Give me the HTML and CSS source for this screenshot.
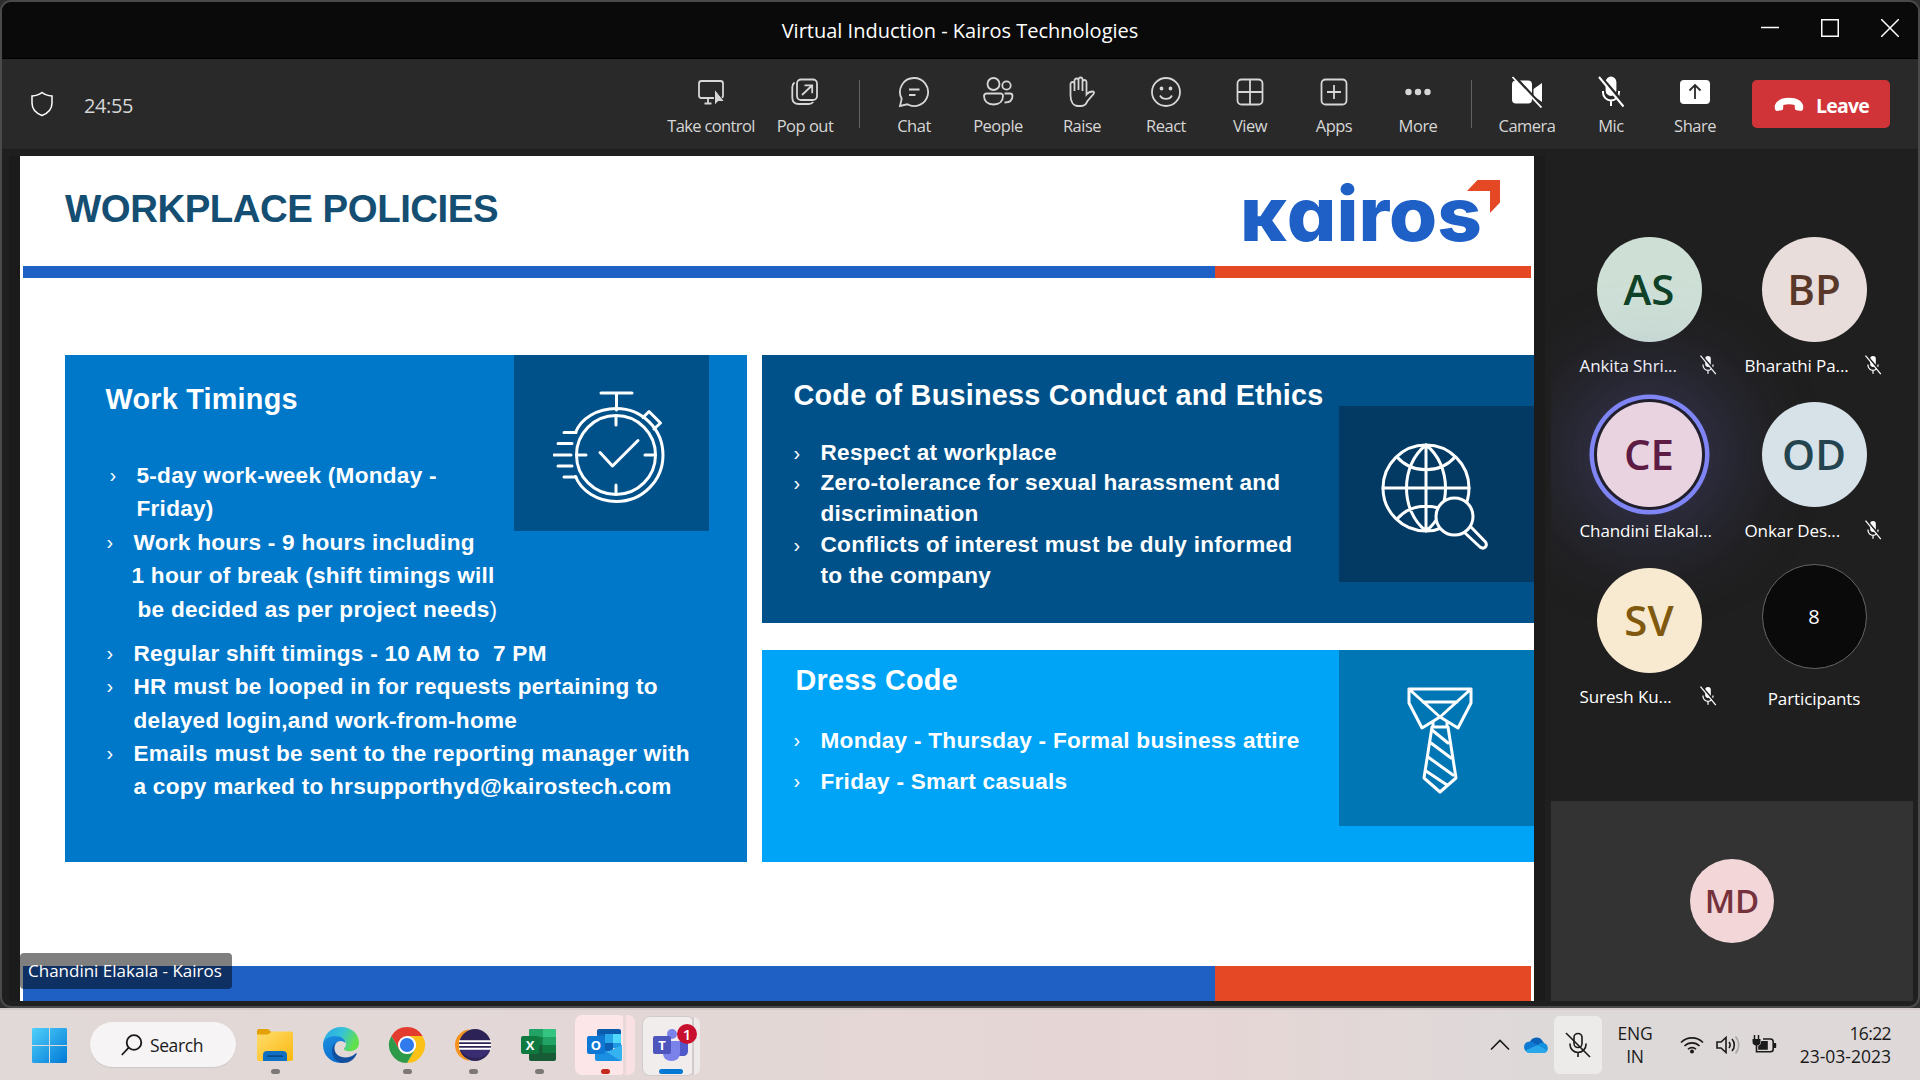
FILE: index.html
```html
<!DOCTYPE html>
<html lang="en">
<head>
<meta charset="utf-8">
<title>Virtual Induction - Kairos Technologies</title>
<link rel="stylesheet" href="styles.css">
</head>
<body>
<svg width="0" height="0" class="defs">
  <defs>
    <symbol id="mic-off" viewBox="0 0 32 32">
      <rect x="11.500" y="1.500" width="9" height="17.500" rx="4.500" fill="currentColor"/>
      <path d="M8 15v1.500a8 8 0 0 0 16 0V15M16 24.500V30" fill="none" stroke="currentColor" stroke-width="2"/>
      <path d="M5.500.500 31 30" stroke="var(--cut)" stroke-width="3"/>
      <path d="M4 1 28.500 30.500" stroke="currentColor" stroke-width="2"/>
    </symbol>
  </defs>
</svg>
<div class="window">
  <header class="titlebar">
    <span class="title">Virtual Induction - Kairos Technologies</span>
    <div class="winbtns">
      <svg width="18" height="18" viewBox="0 0 18 18"><path d="M0 8.500h18"/></svg>
      <svg width="18" height="18" viewBox="0 0 18 18"><path d="M.75.750h16.500v16.500H.75z"/></svg>
      <svg width="18" height="18" viewBox="0 0 18 18"><path d="M0 0l18 18M18 0 0 18"/></svg>
    </div>
  </header>
  <div class="toolbar">
    <svg class="shield" width="24" height="26" viewBox="0 0 24 26"><path d="M12 1.500c3 2.500 6 3.300 10 3.500v7c0 6-3.500 10-10 12.500C5.500 22 2 18 2 12V5c4-.2 7-1 10-3.500z"/></svg>
    <span class="timer">24:55</span>
    <div class="tool take">
      <svg viewBox="0 0 32 32"><rect x="4" y="5" width="24" height="17" rx="2.500"/><path d="M13 22v5M9.500 27.500h7"/><path d="M19.500 13v16.500l3.500-4h6.500z" fill="#d6d6d6" stroke="#292929" stroke-width="1"/></svg>
      <span>Take control</span>
    </div>
    <div class="tool pop">
      <svg viewBox="0 0 32 32"><rect x="8" y="3.500" width="20" height="20.500" rx="4"/><path d="M5.500 6.500C3.800 8 3.300 9 3.300 11v10.500c0 4 2.500 6.500 6.500 6.500h10c2 0 3.200-.6 4.500-2"/><path d="M13 19 23 9.500M15.500 9.300h7.700v8"/></svg>
      <span>Pop out</span>
    </div>
    <i class="sep s1"></i>
    <div class="tool">
      <svg viewBox="0 0 32 32"><path d="M16 2a14 14 0 1 1-6.600 26.300L2 30l1.700-7.300A14 14 0 0 1 16 2z"/><path d="M11 13.500h10.500M11 19h6.500"/></svg>
      <span>Chat</span>
    </div>
    <div class="tool">
      <svg viewBox="0 0 32 32"><circle cx="11.500" cy="8" r="6"/><circle cx="24.500" cy="9.500" r="4.200"/><path d="M4.500 17.500h14a2.500 2.500 0 0 1 2.500 2.500c0 5-3.500 8.500-9.500 8.500S2 25 2 20a2.500 2.500 0 0 1 2.500-2.500zM22.500 17.500H28a2.500 2.500 0 0 1 2.500 2.500c0 4-2.500 6.500-8 6.500"/></svg>
      <span>People</span>
    </div>
    <div class="tool">
      <svg viewBox="0 0 32 32"><path d="M8.500 15V8a2 2 0 0 0-4 0v11c0 6 2.500 11 7.500 11h3c4 0 5-2 6.500-5l6-7c1-1.500.5-2.500-1-2.500-2.500 0-4 .5-6 3V6a2 2 0 0 0-4 0v9M8.500 15V4.500a2 2 0 0 1 4 0V14M12.500 14V3.500a2 2 0 0 1 4 0V14"/></svg>
      <span>Raise</span>
    </div>
    <div class="tool">
      <svg viewBox="0 0 32 32"><circle cx="16" cy="16" r="14"/><circle cx="11.500" cy="12.500" r="1" fill="#d6d6d6"/><circle cx="20.500" cy="12.500" r="1" fill="#d6d6d6"/><path d="M10 19.500c2.500 4.500 9.500 4.500 12 0"/></svg>
      <span>React</span>
    </div>
    <div class="tool">
      <svg viewBox="0 0 32 32"><rect x="3.500" y="3.500" width="25" height="25" rx="4"/><path d="M16 3.500v25M3.500 16h25"/></svg>
      <span>View</span>
    </div>
    <div class="tool">
      <svg viewBox="0 0 32 32"><rect x="3.500" y="3.500" width="25" height="25" rx="4"/><path d="M16 9v14M9 16h14"/></svg>
      <span>Apps</span>
    </div>
    <div class="tool">
      <svg viewBox="0 0 32 32"><g fill="#d6d6d6" stroke="none"><circle cx="6.500" cy="16" r="3.200"/><circle cx="16" cy="16" r="3.200"/><circle cx="25.500" cy="16" r="3.200"/></g></svg>
      <span>More</span>
    </div>
    <i class="sep s2"></i>
    <div class="tool on">
      <svg viewBox="0 0 32 32"><rect x="1" y="4.500" width="20" height="23" rx="4" fill="#fff" stroke="none"/><path d="M22.500 13 31 7v19l-8.500-6z" fill="#fff" stroke="none"/><path d="M4 1 32 31.500" stroke="#292929" stroke-width="3"/><path d="M1.500 1 30.500 31.500"/></svg>
      <span>Camera</span>
    </div>
    <div class="tool on">
      <svg viewBox="0 0 32 32" class="micbig"><use href="#mic-off"/></svg>
      <span>Mic</span>
    </div>
    <div class="tool on">
      <svg viewBox="0 0 32 32"><rect x="1" y="4" width="30" height="24" rx="4" fill="#fff" stroke="none"/><path d="M16 23V9.500M10.500 14.500 16 9l5.500 5.500" stroke="#292929"/></svg>
      <span>Share</span>
    </div>
    <div class="leave">
      <svg width="30" height="16" viewBox="0 0 30 16"><path d="M15 .8C7 .8 1.500 4.200.8 9c-.3 2.300.2 4.800 2 5l4.700-.8c1.300-.3 1.600-1 1.700-2.500l.1-2.800c3.500-1 7.900-1 11.400 0l.1 2.800c.1 1.500.4 2.200 1.700 2.500l4.700.8c1.800-.2 2.300-2.700 2-5C28.500 4.200 23 .8 15 .8z" fill="#fff"/></svg>
      <span>Leave</span>
    </div>
  </div>
  <main class="stage">
    <section class="slide">
      <div class="slide-head">
        <h1>WORKPLACE POLICIES</h1>
        <svg class="logo" width="262" height="72" viewBox="0 0 262 72">
          <text x="-3" y="65" textLength="242" lengthAdjust="spacingAndGlyphs">кairos</text>
          <path d="M234.500 4H257v22.500L247 37V15h-23z" fill="#e54824"/>
        </svg>
      </div>
      <div class="stripe"><i></i><i></i></div>
      <div class="cards">
        <article class="card timings">
          <div class="copy">
            <h2>Work Timings</h2>
            <p class="li in">5-day work-week (Monday -</p>
            <p class="in">Friday)</p>
            <p class="li second">Work hours - 9 hours including</p>
            <p class="out">1 hour of break (shift timings will</p>
            <p class="in2">be decided as per project needs<b>)</b></p>
            <p class="li gap">Regular shift timings - 10 AM to&nbsp; 7 PM</p>
            <p class="li">HR must be looped in for requests pertaining to</p>
            <p>delayed login,and work-from-home</p>
            <p class="li">Emails must be sent to the reporting manager with</p>
            <p>a copy marked to hrsupporthyd@kairostech.com</p>
          </div>
          <div class="pic">
            <svg width="112" height="112" viewBox="0 0 112 112">
              <path d="M48 2h31M63.500 2v17"/>
              <path d="M22.500 41.500C28 27.500 44 17.500 63.500 17.500a46.500 46.500 0 0 1 0 93C44 110.500 28 99.500 22.500 85.500"/>
              <circle cx="63" cy="64" r="39.500"/>
              <path d="M63 26v8M63 94v8M25 64h8M92 64h9M11 41.500h12M5 52.500h14M1 64h17M5 75h14M11 86h12"/>
              <path d="M47 61.500 59.500 75 85 49.500"/>
              <path d="M90 26.500 96 20.500 107.500 32 101 38"/>
            </svg>
          </div>
        </article>
        <div class="col">
          <article class="card ethics">
            <div class="copy">
              <h2>Code of Business Conduct and Ethics</h2>
              <p class="li">Respect at workplace</p>
              <p class="li">Zero-tolerance for sexual harassment and</p>
              <p>discrimination</p>
              <p class="li">Conflicts of interest must be duly informed</p>
              <p>to the company</p>
            </div>
            <div class="pic">
              <svg width="108" height="108" viewBox="0 0 108 108">
                <circle cx="45" cy="45" r="43"/>
                <path d="M45 2v86M2 45h86M45 2C19 22 19 68 45 88M45 2c26 20 26 66 0 86M16 14c15 17 43 17 58 0M16 76c15-17 43-17 58 0"/>
                <circle cx="73.500" cy="73.500" r="18.500" class="lens"/>
                <path d="M84 90l15 14c4 3 8-1 5.500-5L90 84"/>
              </svg>
            </div>
          </article>
          <article class="card dress">
            <div class="copy">
              <h2>Dress Code</h2>
              <p class="li">Monday - Thursday - Formal business attire</p>
              <p class="li">Friday - Smart casuals</p>
            </div>
            <div class="pic">
              <svg width="66" height="108" viewBox="0 0 66 108">
                <path d="M2 2h62v14L51 41 33 30 15 41 2 16zM2 2l31 28L64 2M16 15h34M26 35v5h14v-5M25 40 17 91l16 14 16-14-8-51"/>
                <path d="M25 43l16 13M24 56l20 15M21 70l25 18M19 84l21 14"/>
              </svg>
            </div>
          </article>
        </div>
      </div>
      <div class="footer"><i></i><i></i></div>
      <span class="presenter">Chandini Elakala - Kairos</span>
    </section>
    <aside class="side">
      <div class="people">
        <div class="person"><span class="av as">AS</span><div class="nm"><span>Ankita Shri...</span><svg viewBox="0 0 32 32"><use href="#mic-off"/></svg></div></div>
        <div class="person"><span class="av bp">BP</span><div class="nm"><span>Bharathi Pa...</span><svg viewBox="0 0 32 32"><use href="#mic-off"/></svg></div></div>
        <div class="person"><span class="av ce">CE</span><div class="nm"><span>Chandini Elakal...</span></div></div>
        <div class="person"><span class="av od">OD</span><div class="nm"><span>Onkar Des...</span><svg viewBox="0 0 32 32"><use href="#mic-off"/></svg></div></div>
        <div class="person"><span class="av sv">SV</span><div class="nm"><span>Suresh Ku...</span><svg viewBox="0 0 32 32"><use href="#mic-off"/></svg></div></div>
        <div class="person more"><span class="av count">8</span><div class="nm"><span>Participants</span></div></div>
      </div>
      <div class="self"><span class="av md">MD</span></div>
    </aside>
  </main>
</div>
<footer class="taskbar">
  <svg class="start" width="35" height="35" viewBox="0 0 35 35">
    <defs><linearGradient id="win" x1="0" y1="0" x2="1" y2="1"><stop offset="0" stop-color="#4fd0fb"/><stop offset="1" stop-color="#0078d6"/></linearGradient></defs>
    <path d="M0 1.500C0 .7.700 0 1.500 0H17v17H0zM18 0h15.500c.8 0 1.500.7 1.500 1.500V17H18zM0 18h17v17H1.500C.7 35 0 34.300 0 33.500zM18 18h17v15.500c0 .8-.7 1.500-1.500 1.500H18z" fill="url(#win)"/>
  </svg>
  <div class="search">
    <svg width="22" height="22" viewBox="0 0 22 22"><circle cx="13" cy="8.500" r="7.300"/><path d="M7.700 13.700.8 21"/></svg>
    <span>Search</span>
  </div>
  <div class="app run">
    <svg viewBox="0 0 36 36"><defs><linearGradient id="fo" x1="0" y1="0" x2="1" y2="1"><stop offset="0" stop-color="#ffdc6e"/><stop offset="1" stop-color="#fbb90f"/></linearGradient></defs><path d="M0 4c0-1 .5-2 2-2h9l4 3.500h-1L12 8H0z" fill="#e2a207"/><path d="M0 7.500h11l4-3h19c1 0 2 .7 2 2V32c0 1.300-.7 2-2 2H2c-1.300 0-2-.7-2-2z" fill="url(#fo)"/><path d="M6 34v-6c0-2.500 1.500-4 4-4h16c2.500 0 4 1.500 4 4v6z" fill="#0f6fc0"/><path d="M11 29.200h14" stroke="#0a4a86" stroke-width="1.800" stroke-linecap="round"/></svg>
  </div>
  <div class="app">
    <svg viewBox="0 0 36 36"><defs><linearGradient id="e1" x1="0" y1="0" x2="1" y2=".35"><stop offset="0" stop-color="#2aa5e8"/><stop offset=".55" stop-color="#35c3d8"/><stop offset="1" stop-color="#62e04c"/></linearGradient><linearGradient id="e2" x1="0" y1="0" x2=".3" y2="1"><stop offset="0" stop-color="#1b8fe0"/><stop offset="1" stop-color="#0c6fcf"/></linearGradient></defs>
    <path d="M0 17C1 7 8.500 0 18 0c10.500 0 18 7 18 15.500 0 5.500-4 8.700-9 8.700-4 0-6.500-1.300-6-3 1.500-1 2-2.500 2-4.200C23 13 18.500 9.500 12.500 9.500 6 9.500 1.500 12.500 0 17z" fill="url(#e1)"/>
    <path d="M0 18C0 12.500 5.500 9 12 9c6.500 0 10.500 3.500 10.500 7-1-1-2.500-2-4.500-2-5 0-7.500 5-6.500 10 1 5.500 4.500 9.500 9.500 11.700C8.500 37.500 0 28.500 0 18z" fill="url(#e2)"/>
    <path d="M12.500 15.500C9 22 13 30.500 22 30.500c4 0 8-1.500 10.500-4 1-.5 1.500 0 1 1C31 32.500 26 36 20.500 36 13 36 9 29 9 24c0-4 1.500-7 3.500-8.500z" fill="#124f9e"/></svg>
  </div>
  <div class="app run">
    <svg viewBox="0 0 36 36"><path d="M2.400 9A18 18 0 0 1 33.600 9H18l-7.800 13.500z" fill="#e33b2e"/><path d="M33.600 9A18 18 0 0 1 18 36l7.800-13.500A9 9 0 0 0 18 9z" fill="#fbc116"/><path d="M18 36A18 18 0 0 1 2.400 9l7.800 13.500A9 9 0 0 0 25.800 22.500z" fill="#2c9a48"/><circle cx="18" cy="18" r="9" fill="#fff"/><circle cx="18" cy="18" r="7.100" fill="#2f7bee"/></svg>
  </div>
  <div class="app run">
    <svg viewBox="0 0 36 36"><path d="M15 2C6 3 0 10 0 18s6 15 15 16C9 30 5 25 5 18S9 6 15 2z" fill="#f7941e"/><circle cx="20" cy="18" r="16" fill="#2c2255"/><path d="M4.500 22h31A16 16 0 0 1 20 31C13 31 8 27 4.500 22z" fill="#40307c" opacity=".7"/><path d="M4 14.200h32M4 18h32M4 21.800h32" stroke="#fff" stroke-width="2"/></svg>
  </div>
  <div class="app run">
    <svg viewBox="0 0 36 36"><rect x="8" y="2" width="27" height="32" rx="2" fill="#185c37"/><path d="M8 4c0-1.200.8-2 2-2h11.500v8H8z" fill="#21a366"/><path d="M21.500 2H33c1.200 0 2 .8 2 2v6H21.500z" fill="#33c481"/><path d="M8 10h13.500v8H8zM21.500 18H35v8H21.500z" fill="#107c41"/><path d="M21.500 10H35v8H21.500z" fill="#21a366"/><rect x="0" y="9" width="18" height="18" rx="2" fill="#0f7a40"/><text x="9" y="22.500">X</text></svg>
  </div>
  <div class="group out1">
    <i class="back"></i>
    <svg viewBox="0 0 36 36"><path d="M10 4c0-1.200.8-2 2-2h20c1.200 0 2 .8 2 2v14H10z" fill="#0a5bab"/><path d="M10 7h8v9h-8z" fill="#1068bb"/><path d="M18 7h8v9h-8z" fill="#28a8ea"/><path d="M26 7h8v9h-8z" fill="#50d9ff"/><path d="M10 16h16v8H10z" fill="#0a60b4"/><path d="M26 16h8v5h-8z" fill="#2098e4"/><path d="M8 18l14 7 13-7v14c0 1.200-.8 2-2 2H10c-1.200 0-2-.8-2-2z" fill="#1b8fe2"/><path d="M35 18v14c0 1-.5 1.700-1.300 2L20 25z" fill="#35b2f0"/><rect x="0" y="9" width="18" height="18" rx="2" fill="#0f78d4"/><text x="9" y="22.500">O</text></svg>
    <b class="dot"></b>
  </div>
  <div class="group teams">
    <i class="back"></i>
    <svg viewBox="0 0 36 36"><circle cx="19" cy="7" r="5" fill="#7b83eb"/><path d="M26 14h9v10c0 3-2 5-5 5h-4z" fill="#5059c9"/><path d="M10 14h17v12c0 5-3.500 8-8.500 8S10 31 10 26z" fill="#7b83eb"/><rect x="0" y="9" width="18" height="18" rx="2" fill="#4e55bd"/><text x="9" y="22.500">T</text></svg>
    <b class="bar"></b>
    <span class="badge">1</span>
  </div>
  <div class="tray">
    <svg class="chev" width="20" height="12" viewBox="0 0 20 12"><path d="M1 10.500 10 1.500l9 9"/></svg>
    <svg class="cloud" width="24" height="16" viewBox="0 0 24 16"><path d="M6 5a7 7 0 0 1 12.500-1L20 6l-9 5z" fill="#0a63b8"/><path d="M5.500 4.500c3 0 4 1 6 2.500l6 3-12 5.500A5.500 5.500 0 0 1 5.500 4.500z" fill="#0f7ad4"/><path d="M15 7c2-2 5-1.500 6-.5 4 1.500 4 9.500-1.500 9.500L12 10z" fill="#1490df"/><path d="M1.500 13.500 13.500 8 23 13.500c-1 2-2.500 2.500-4 2.500H5.500c-2 0-3.300-1-4-2.500z" fill="#28a8ea"/></svg>
    <span class="micbox"><svg width="26" height="26" viewBox="0 0 26 26"><rect x="9" y="1.500" width="8" height="14" rx="4"/><path d="M5 11.500v1a8 8 0 0 0 16 0v-1M13 20.500V25M1 1l24 24"/></svg></span>
    <span class="lang">ENG<br>IN</span>
    <svg class="wifi" width="24" height="18" viewBox="0 0 24 18"><path d="M1 6.500a15.500 15.500 0 0 1 22 0M4.500 10a10.600 10.600 0 0 1 15 0M8 13.300a5.700 5.700 0 0 1 8 0"/><circle cx="12" cy="15.500" r="2" fill="#1a1a1a" stroke="none"/></svg>
    <svg class="vol" width="24" height="20" viewBox="0 0 24 20"><path d="M1 7v6h4l5 4.500v-15L5 7zM13 7a5 5 0 0 1 0 6M16 4a9 9 0 0 1 0 12"/><path d="M19.500 1.500a13 13 0 0 1 0 17" stroke="#aaa6a6"/></svg>
    <svg class="bat" width="25" height="20" viewBox="0 0 25 20"><path d="M2.500 0v4M6.500 0v4" stroke-width="1.500"/><path d="M.5 4h8v3c0 2-1.500 3.500-4 3.500S.5 9 .5 7z" fill="#1a1a1a" stroke="none"/><path d="M4.500 10v6.700h14c2 0 2.700-1 2.700-2.700V7c0-2-1-3-2.700-3H11"/><path d="M7 11.500c2-1 3-2.500 3-4.800h5V14H7z" fill="#1a1a1a"/><path d="M22 8h1.200c.7 0 1 .4 1 1v3c0 .6-.3 1-1 1H22z" fill="#1a1a1a" stroke="none"/></svg>
    <span class="clock"><span class="time">16:22</span><br>23-03-2023</span>
  </div>
</footer>
</body>
</html>
```
FILE: styles.css
```css
* { box-sizing: border-box; }
body {
  margin: 0;
  width: 1920px;
  height: 1080px;
  overflow: hidden;
  background: #2e2e2e;
  font-family: "Open Sans", "Noto Sans", sans-serif;
  color: #fff;
}
.defs { position: absolute; }
h1, h2, p { margin: 0; }

/* meeting window */
.window {
  height: 1008px;
  border: 2px solid #4a4a4a;
  border-radius: 11px;
  background: #1f1f1f;
  overflow: hidden;
}
.titlebar {
  display: grid;
  grid-template-columns: 1fr auto 1fr;
  height: 57px;
  background: #0a0a0a;
  border-bottom: 1px solid #000;
}
.title {
  grid-column: 2;
  font-size: 20px;
  line-height: 30px;
  padding-top: 14px;
  white-space: nowrap;
}
.winbtns {
  justify-self: end;
  display: flex;
  gap: 42px;
  padding: 17px 19px 0 0;
}
.winbtns svg { fill: none; stroke: #fff; stroke-width: 1.5; }

.toolbar {
  display: flex;
  align-items: flex-start;
  height: 90px;
  padding-right: 28px;
  background: #292929;
  --cut: #292929;
}
.shield { margin: 32px 0 0 28px; fill: none; stroke: #fff; stroke-width: 1.5; flex: none; }
.timer {
  margin: 34px auto 0 30px;
  font-size: 20px;
  line-height: 26px;
  letter-spacing: -.4px;
  color: #d6d6d6;
}
.tool {
  display: flex;
  flex-direction: column;
  align-items: center;
  gap: 8px;
  width: 84px;
  padding-top: 17px;
  font-size: 16.500px;
  line-height: 20px;
  letter-spacing: -.5px;
  white-space: nowrap;
  color: #d6d6d6;
}
.tool svg { width: 32px; height: 32px; fill: none; stroke: #d6d6d6; stroke-width: 1.8; }
.tool.on svg { stroke: #fff; color: #fff; }
.tool .micbig { stroke: none; }
.take { width: 96px; letter-spacing: -.65px; }
.pop { width: 92px; }
.sep { width: 1px; height: 48px; margin-top: 21px; background: #616161; }
.s1 { margin-left: 8px; margin-right: 12px; }
.s2 { margin-left: 11px; margin-right: 13px; }
.leave {
  display: flex;
  align-items: center;
  gap: 12px;
  width: 138px;
  height: 48px;
  margin: 21px 0 0 15px;
  padding: 2px 0 0 22px;
  border-radius: 5px;
  background: #d13438;
  font-size: 19.500px;
  font-weight: 700;
  letter-spacing: -.8px;
}

.stage { display: flex; height: 857px; }

/* shared slide */
.slide {
  position: relative;
  display: flex;
  flex-direction: column;
  width: 1514px;
  height: 845px;
  margin: 7px 0 0 18px;
  background: #fff;
  box-shadow: 0 0 0 11px #1b1b1b;
  clip-path: inset(0 -11px 0 -11px);
  font-family: "Liberation Sans", Arial, sans-serif;
}
.slide-head { display: flex; justify-content: space-between; height: 109.500px; }
h1 {
  padding: 28px 0 0 45px;
  font-size: 38.400px;
  line-height: 50px;
  letter-spacing: -.47px;
  color: #144e72;
  white-space: nowrap;
}
.logo { margin: 20px 29px 0 0; overflow: visible; }
.logo text {
  font-family: Inter, sans-serif;
  font-weight: 800;
  font-size: 75px;
  font-feature-settings: "cv11";
  fill: #1e60c6;
}
.stripe, .footer { display: flex; padding: 0 3px; flex: none; }
.stripe { height: 12px; }
.footer { height: 35px; margin-top: auto; }
.stripe i:first-child, .footer i:first-child { width: 1191.500px; background: #1e60c4; }
.stripe i:last-child, .footer i:last-child { flex: 1; background: #e54824; }

.cards { display: flex; gap: 15px; height: 507px; margin: 77.500px 0 0 45px; }
.col { display: flex; flex-direction: column; justify-content: space-between; flex: 1; }
.card { display: flex; align-items: flex-start; }
.timings { width: 682px; background: #0078ca; }
.ethics { height: 267.500px; background: #005189; }
.dress { height: 212px; background: #00a4f6; }
.copy {
  flex: none;
  white-space: nowrap;
  font-size: 22.600px;
  font-weight: 700;
  letter-spacing: .26px;
  --lh: 30.800px;
}
.copy h2 { font-size: 28.800px; line-height: 34px; letter-spacing: .24px; }
.copy p { position: relative; line-height: var(--lh); }
.copy b { font-weight: 400; }
.li::before {
  content: "›";
  position: absolute;
  left: -27px;
  font-weight: 400;
  font-size: 20px;
}
.timings .copy { width: 449px; padding: 27px 0 0 68.500px; --lh: 33.300px; }
.timings h2 { margin: 0 0 42.500px -28px; }
.in { left: 3px; }
.in2 { left: 4px; }
.out { left: -2px; }
.second { margin-top: 1px; }
.gap { margin-top: 11.200px; }
.ethics .copy { width: 576.500px; padding: 22.700px 0 0 58.500px; }
.ethics h2 { margin: 0 0 26px -27px; }
.dress .copy { width: 576.500px; padding: 13.200px 0 0 58.500px; --lh: 41.300px; }
.dress h2 { margin: 0 0 22.500px -25px; }
.pic {
  display: flex;
  width: 195.500px;
  height: 175.500px;
  background: #005189;
}
.pic svg { fill: none; stroke: #fff; stroke-width: 3; stroke-linejoin: round; stroke-linecap: round; }
.timings .pic { width: 195px; }
.timings .pic svg { margin: 36px 0 0 39px; }
.ethics .pic { margin-top: 51px; background: #023a63; }
.ethics .pic svg { margin: 37px 0 0 42px; }
.lens { fill: #023a63; }
.dress .pic { background: #0076b4; }
.dress .pic svg { margin: 37px 0 0 68px; }
.presenter {
  position: absolute;
  left: 0;
  bottom: 12px;
  width: 212px;
  height: 36px;
  padding: 6px 8px;
  border-radius: 4px;
  background: rgba(0, 0, 0, .5);
  font: 17px/24px "Open Sans", "Noto Sans", sans-serif;
  white-space: nowrap;
}

/* participants */
.side {
  display: flex;
  flex-direction: column;
  justify-content: space-between;
  width: 362px;
  margin-left: 17px;
  padding: 88px 0 5px;
  overflow: hidden;
}
.people {
  display: grid;
  grid-template-columns: 165px 165px;
  grid-auto-rows: 165.300px;
  margin-left: 15.500px;
}
.person { display: flex; flex-direction: column; align-items: center; }
.av {
  display: flex;
  align-items: center;
  justify-content: center;
  width: 105px;
  height: 105px;
  padding-bottom: 2px;
  border-radius: 50%;
  font-size: 42px;
  font-weight: 600;
  flex: none;
}
.as { background: #cee0d6; color: #0f4227; }
.bp { background: #e8ddda; color: #59382a; }
.ce {
  background: #ead3e1;
  color: #5c1c44;
  box-shadow: 0 0 0 3px #201f2b, 0 0 0 7.500px #7f85f5, 0 0 90px 34px rgba(98, 100, 190, .3);
}
.od { background: #d6e2e8; color: #24454f; }
.sv { background: #f7ead0; color: #80590f; }
.count { padding: 1px 0 0; background: #0a0a0a; border: 1px solid #666; font-size: 20px; font-weight: 400; }
.more { margin-top: -4px; }
.nm {
  display: flex;
  align-items: center;
  justify-content: space-between;
  width: 139px;
  margin-top: 12px;
  font-size: 17px;
  line-height: 24px;
  letter-spacing: -.1px;
  white-space: nowrap;
  --cut: #1f1f1f;
}
.nm svg { width: 20px; height: 20px; margin-right: 1px; margin-top: -2px; }
.more .nm { justify-content: center; margin-top: 18px; }
.self {
  display: flex;
  align-items: center;
  justify-content: center;
  height: 200px;
  background: #333;
}
.md { width: 84px; height: 84px; background: #f3d6d8; color: #75323d; font-size: 33px; }

/* taskbar */
.taskbar {
  display: flex;
  align-items: flex-start;
  height: 72px;
  background: linear-gradient(90deg, #e1d9d7, #e3d7d6 40%, #e6d6d5 62%, #ded9d9 80%, #ded8d8);
  border-top: 2px solid #d5cbcb;
  color: #1a1a1a;
}
.start { margin: 18px 0 0 32px; flex: none; }
.search {
  display: flex;
  align-items: center;
  gap: 7px;
  width: 146px;
  height: 45px;
  margin: 12px 21px 0 23px;
  padding-left: 31px;
  border-radius: 23px;
  background: #f6f4f4;
  box-shadow: 0 1px 1px #cfc8c8;
  font-size: 17.500px;
  letter-spacing: -.4px;
}
.search svg { fill: none; stroke: #1a1a1a; stroke-width: 1.800; }
.app { position: relative; width: 36px; height: 62px; margin-right: 30px; padding-top: 17px; }
.app svg { display: block; width: 36px; height: 36px; overflow: visible; }
.run::after {
  content: "";
  position: absolute;
  left: 14px;
  top: 59px;
  width: 9px;
  height: 5px;
  border-radius: 3px;
  background: #7c7878;
}
.taskbar text { font: 700 13px "Open Sans", sans-serif; fill: #fff; text-anchor: middle; }
.group {
  position: relative;
  width: 51px;
  height: 60px;
  margin: 5px 17px 0 -12px;
  padding: 12px 0 0 12px;
  border-radius: 7px;
}
.group svg { position: relative; display: block; width: 36px; height: 36px; }
.back { position: absolute; top: 0; bottom: 0; right: -9px; width: 12px; border-radius: 0 7px 7px 0; }
.out1 { background: #fde6e8; }
.out1 .back { background: #f9e1e3; border-left: 3px solid #e8d8d8; }
.teams {
  height: 58px;
  margin: 7px 0 0;
  padding: 10px 0 0 10px;
  background: #f1edec;
  box-shadow: 0 0 0 1px #d3cbcb;
}
.teams .back { right: -6px; width: 8px; background: #efeaea; border-left: 2px solid #d3cbcb; }
.dot, .bar { position: absolute; height: 5px; border-radius: 3px; }
.dot { left: 26px; bottom: 1px; width: 9px; background: #c42b1c; }
.bar { left: 16px; bottom: 1px; width: 24px; background: #0078d4; }
.badge {
  position: absolute;
  left: 34px;
  top: 7px;
  width: 20px;
  height: 20px;
  border-radius: 50%;
  background: #c8102e;
  color: #fff;
  font-size: 15px;
  font-weight: 600;
  line-height: 20px;
  text-align: center;
}
.tray {
  display: flex;
  align-items: center;
  height: 70px;
  margin-left: auto;
  padding-right: 29px;
  font-size: 17.500px;
  line-height: 23px;
}
.tray svg { fill: none; stroke: #1a1a1a; stroke-width: 1.600; flex: none; }
.tray .cloud { stroke: none; margin: 0 6px 0 14px; }
.micbox {
  display: flex;
  align-items: center;
  justify-content: center;
  width: 48px;
  height: 58px;
  border-radius: 6px;
  background: #edebea;
}
.lang { width: 66px; text-align: center; letter-spacing: -.2px; }
.wifi { margin-left: 12px; }
.vol { margin: 0 12px; }
.clock { width: 114px; text-align: right; }
.time { letter-spacing: -.6px; }
```
